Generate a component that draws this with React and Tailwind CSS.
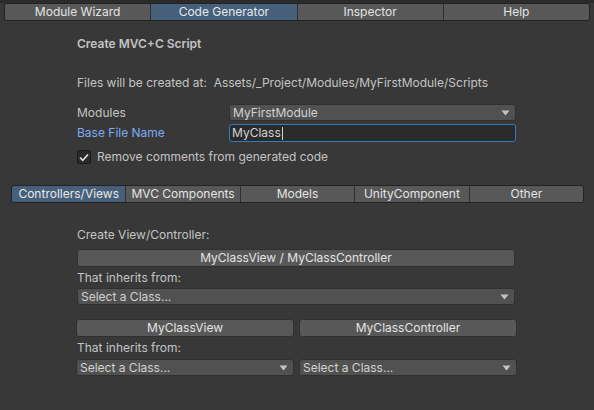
import React from "react";

const font = { fontFamily: "Inter, 'Noto Sans', sans-serif" };

function Caret() {
  return (
    <svg width="9" height="6" viewBox="0 0 9 6" className="shrink-0">
      <path d="M0.5 0.5 L8.5 0.5 L4.5 5.5 Z" fill="#c4c4c4" />
    </svg>
  );
}

function Dropdown({ text, className = "" }) {
  return (
    <div
      className={`flex h-[17px] items-center justify-between rounded-[3px] border border-[#303030] bg-[#515151] pl-[3px] pr-[5px] text-[12px] leading-none text-[#d2d2d2] ${className}`}
    >
      <span>{text}</span>
      <Caret />
    </div>
  );
}

function Button({ text, className = "" }) {
  return (
    <div
      className={`flex h-[18px] items-center justify-center rounded-[3px] border border-[#303030] bg-[#585858] text-[12px] leading-none text-[#e4e4e4] ${className}`}
    >
      {text}
    </div>
  );
}

export default function App() {
  const top = ["Module Wizard", "Code Generator", "Inspector", "Help"];
  const sub = ["Controllers/Views", "MVC Components", "Models", "UnityComponent", "Other"];
  return (
    <div className="h-[410px] w-[594px] overflow-hidden bg-[#383838] text-[#c4c4c4]" style={font}>
      <div className="h-[3px] bg-[#2b2b2b]" />
      <div className="mx-[4px] flex h-[18px] overflow-hidden rounded-[3px] border border-[#232323]">
        {top.map((t, i) => (
          <div
            key={t}
            className={`flex flex-1 items-center justify-center text-[12px] leading-none ${
              i === 1 ? "bg-[#46607c] text-[#e8e8e8]" : "bg-[#585858] text-[#e4e4e4]"
            } ${i > 0 ? "border-l border-[#303030]" : ""}`}
          >
            {t}
          </div>
        ))}
      </div>

      <div className="pl-[77px] pr-[78px]">
        <div className="mt-[16px] h-[14px] text-[12px] font-semibold leading-[14px] text-[#c4c4c4]">Create MVC+C Script</div>
        <div className="mt-[25px] h-[14px] text-[12px] leading-[14px]">
          Files will be created at:&nbsp; Assets/_Project/Modules/MyFirstModule/Scripts
        </div>
        <div className="mt-[14px] flex items-center">
          <div className="w-[152px] text-[12px] leading-none">Modules</div>
          <Dropdown text="MyFirstModule" className="flex-1" />
        </div>
        <div className="mt-[3px] flex items-center">
          <div className="w-[152px] text-[12px] leading-none text-[#7bacf2]">Base File Name</div>
          <div className="flex h-[18px] flex-1 items-center rounded-[3px] border border-[#3a79bb] bg-[#2a2a2a] pl-[2px] text-[12px] leading-none text-[#d2d2d2]">
            MyClass<span className="ml-px inline-block h-[13px] w-px bg-[#d2d2d2]" />
          </div>
        </div>
        <div className="mt-[8px] flex items-center">
          <div className="flex h-[14px] w-[14px] items-center justify-center rounded-[2px] border border-[#191919] bg-[#2a2a2a]">
            <svg width="10" height="9" viewBox="0 0 10 9">
              <path d="M1 4.5 L3.8 7.3 L9 1.5" stroke="#e0e0e0" strokeWidth="1.6" fill="none" />
            </svg>
          </div>
          <div className="ml-[6px] text-[12px] leading-none">Remove comments from generated code</div>
        </div>
      </div>

      <div className="ml-[11px] mr-[10px] mt-[21px] flex h-[18px] overflow-hidden rounded-[3px] border border-[#232323]">
        {sub.map((t, i) => (
          <div
            key={t}
            className={`flex flex-1 items-center justify-center text-[12px] leading-none ${
              i === 0 ? "bg-[#46607c] text-[#e8e8e8]" : "bg-[#585858] text-[#e4e4e4]"
            } ${i > 0 ? "border-l border-[#303030]" : ""}`}
          >
            {t}
          </div>
        ))}
      </div>

      <div className="pl-[77px] pr-[79px]">
        <div className="mt-[25px] h-[14px] text-[12px] leading-[14px]">Create View/Controller:</div>
        <Button text="MyClassView / MyClassController" className="mt-[7px]" />
        <div className="mt-[4px] h-[14px] text-[12px] leading-[14px]">That inherits from:</div>
        <Dropdown text="Select a Class..." className="mt-[3px]" />
      </div>

      <div className="pl-[76px] pr-[77px]">
        <div className="mt-[14px] flex gap-[5px]">
          <Button text="MyClassView" className="flex-1" />
          <Button text="MyClassController" className="flex-1" />
        </div>
        <div className="mt-[4px] h-[14px] pl-[1px] text-[12px] leading-[14px]">That inherits from:</div>
        <div className="mt-[4px] flex gap-[5px]">
          <Dropdown text="Select a Class..." className="flex-1" />
          <Dropdown text="Select a Class..." className="flex-1" />
        </div>
      </div>
    </div>
  );
}
